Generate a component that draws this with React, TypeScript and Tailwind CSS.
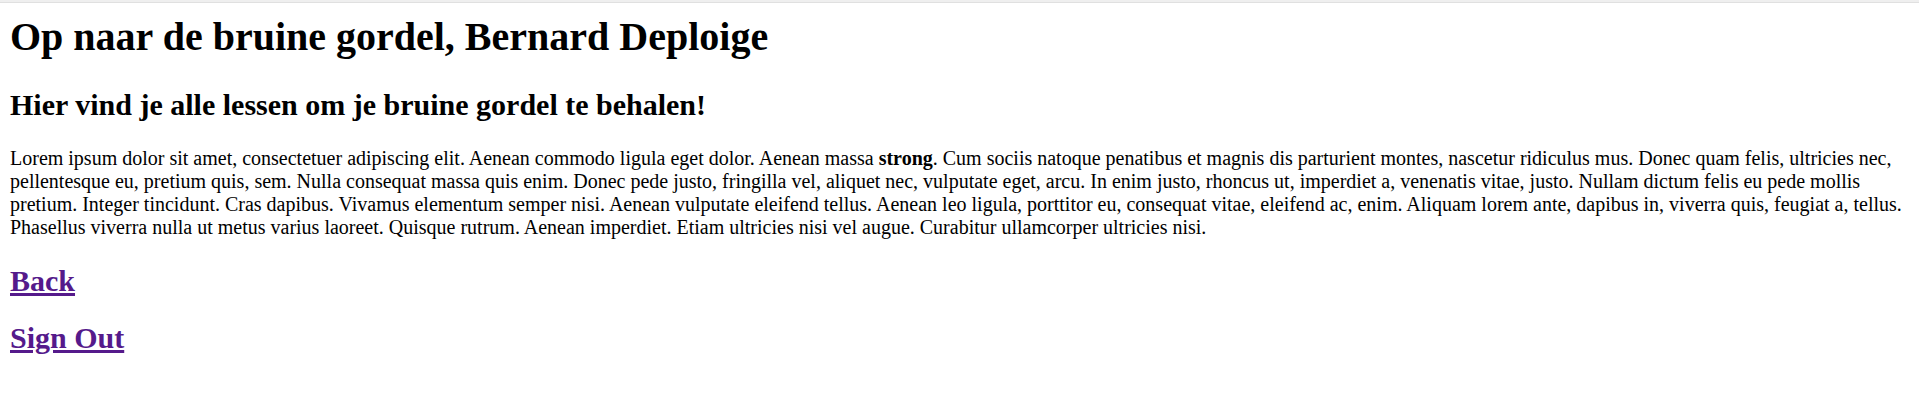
import React from 'react';

export default function App() {
  return (
    <div className="min-h-screen bg-white text-black font-['Liberation_Serif','Times_New_Roman',serif]">
      {/* browser chrome edge */}
      <div className="fixed top-0 left-0 right-0 h-[3px] bg-[#efefef] border-b border-[#e0e0e0]" />

      <div className="px-[10px] pt-[17px] pb-6">
        <h1 className="text-[40px] leading-[40px] font-bold">Op naar de bruine gordel, Bernard Deploige</h1>
        <h2 className="mt-[33px] text-[30px] leading-[30px] font-bold">
          Hier vind je alle lessen om je bruine gordel te behalen!
        </h2>
        <p className="mt-[27px] text-[20px] leading-[23px]">
          Lorem ipsum dolor sit amet, consectetuer adipiscing elit. Aenean commodo ligula eget dolor. Aenean massa{' '}
          <strong className="font-bold">strong</strong>. Cum sociis natoque penatibus et magnis dis parturient montes,
          nascetur ridiculus mus. Donec quam felis, ultricies nec, pellentesque eu, pretium quis, sem. Nulla consequat
          massa quis enim. Donec pede justo, fringilla vel, aliquet nec, vulputate eget, arcu. In enim justo, rhoncus
          ut, imperdiet a, venenatis vitae, justo. Nullam dictum felis eu pede mollis pretium. Integer tincidunt. Cras
          dapibus. Vivamus elementum semper nisi. Aenean vulputate eleifend tellus. Aenean leo ligula, porttitor eu,
          consequat vitae, eleifend ac, enim. Aliquam lorem ante, dapibus in, viverra quis, feugiat a, tellus.
          Phasellus viverra nulla ut metus varius laoreet. Quisque rutrum. Aenean imperdiet. Etiam ultricies nisi vel
          augue. Curabitur ullamcorper ultricies nisi.
        </p>
        <h2 className="mt-[27px] text-[30px] leading-[30px] font-bold">
          <a href="#" className="text-[#551a8b] underline">Back</a>
        </h2>
        <h2 className="mt-[27px] text-[30px] leading-[30px] font-bold">
          <a href="#" className="text-[#551a8b] underline">Sign Out</a>
        </h2>
      </div>
    </div>
  );
}
